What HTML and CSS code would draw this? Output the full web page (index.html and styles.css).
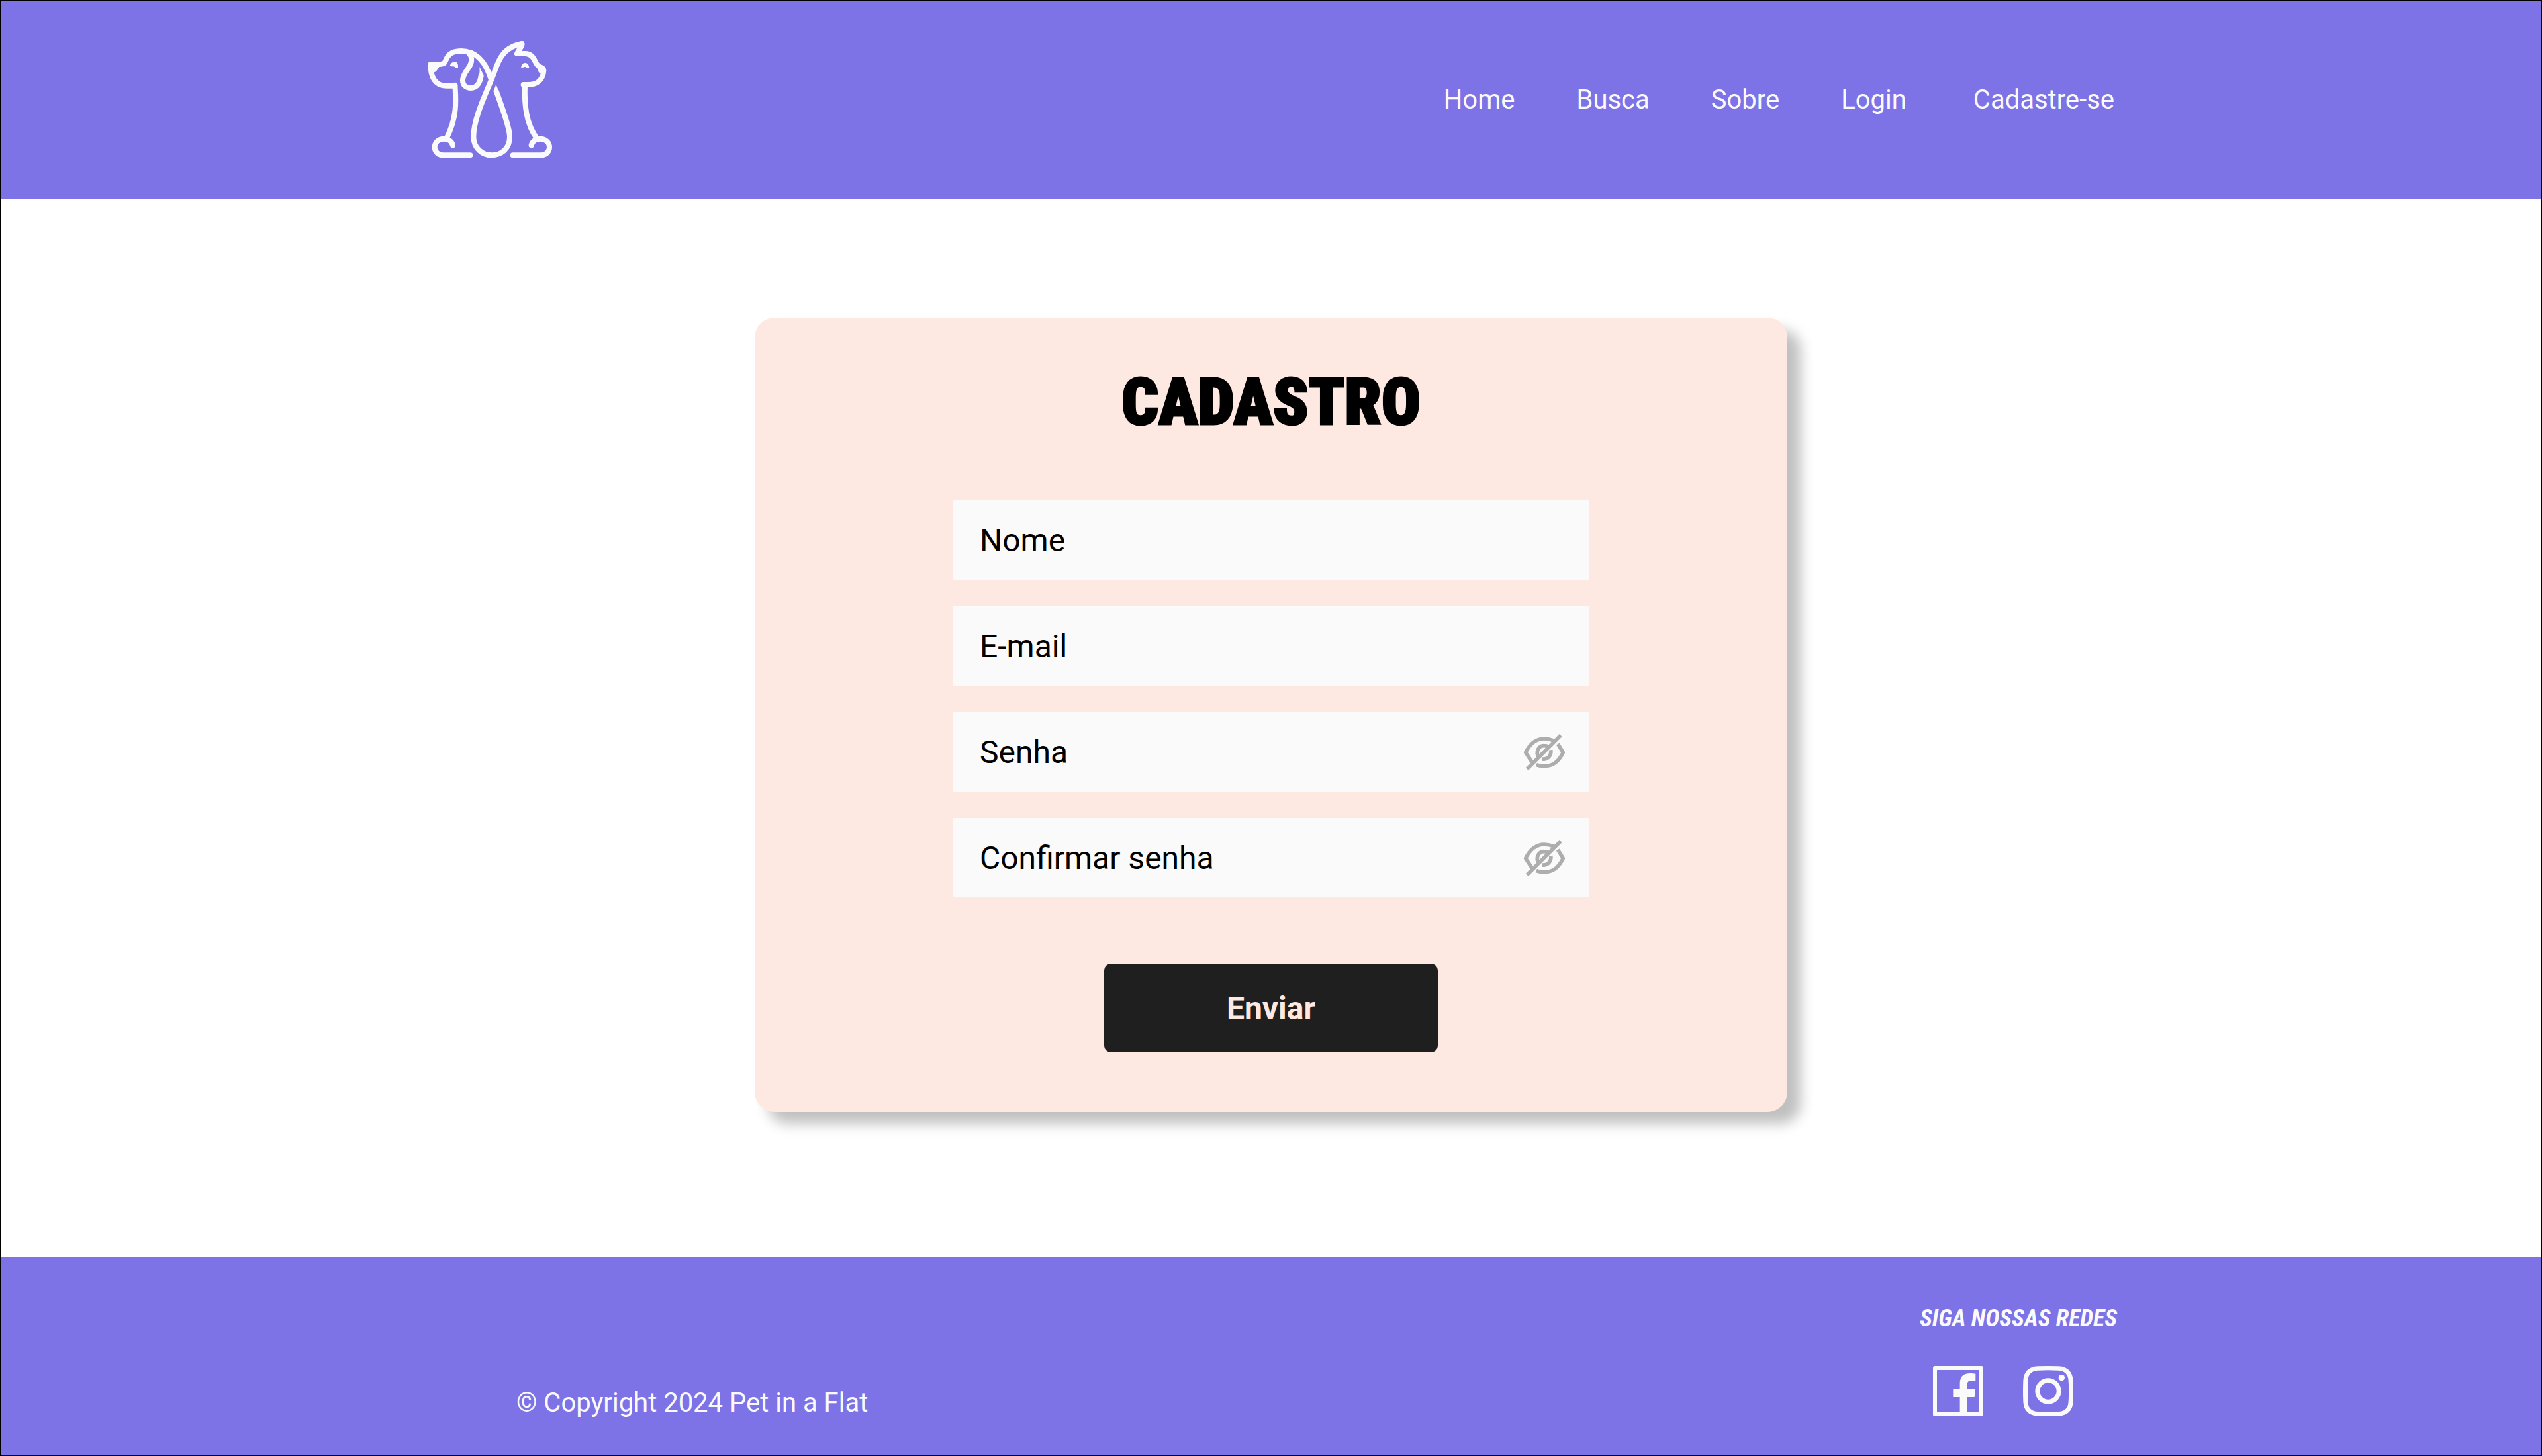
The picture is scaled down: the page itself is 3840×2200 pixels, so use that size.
FILE: index.html
```html
<!DOCTYPE html>
<html lang="pt-BR">
<head>
<meta charset="utf-8">
<meta name="viewport" content="width=device-width, initial-scale=1">
<title>Cadastro - Pet in a Flat</title>
<link rel="stylesheet" href="styles.css">
</head>
<body>
<header class="site-header">
  <a class="logo" href="#" aria-label="Pet in a Flat">
    <svg class="logo-art" viewBox="45 30 570 540" aria-hidden="true">
      <g class="line">
        <path d="M62 142C85 140 105 145 122 137C134 128 130 81 200 81C270 81 310 130 335 208"/>
        <path d="M62 142C60 195 80 239 132 239H172"/>
        <path d="M172 236C176 300 184 380 133 478"/>
        <path d="M162 508C158 490 142 479 122 479C95 479 80 497 80 517C80 538 97 553 118 553H241"/>
        <path d="M232 88C250 105 250 128 239 148C228 168 207 186 207 215C207 238 225 249 244 249C272 249 286 222 290 194"/>
        <path d="M475 48C415 58 385 95 370 128C355 160 348 185 330 228C300 300 256 395 256 470C256 520 295 553 338 553C385 553 420 520 420 470C420 430 385 335 359 264"/>
        <path d="M475 48C478 62 460 75 453 93H490C535 93 532 142 554 152C568 156 574 160 574 171C570 215 540 235 500 234H482"/>
        <path d="M489 236C486 320 492 410 544 479"/>
        <path d="M518 508C522 490 538 479 558 479C585 479 600 497 600 517C600 538 583 553 562 553H434"/>
      </g>
      <g class="solid">
        <path d="M51 135C62 131 104 134 120 142C98 145 98 162 91 167C85 177 76 179 66 178Z"/>
        <path d="M149 148C155 125 186 122 186 148V156C178 162 172 152 165 151C158 150 152 153 149 148Z"/>
        <path d="M472 157V151C478 130 505 128 508 157C500 162 495 153 489 153C482 153 476 160 472 157Z"/>
        <path d="M283 153L301 190L298 206L279 199C285 180 284 170 283 153Z"/>
        <path d="M358 233L372 268L350 272L347 262Z"/>
        <path d="M548 150C542 160 552 164 549 172C553 184 562 184 572 184L580 160Z"/>
      </g>
    </svg>
  </a>
  <nav class="main-nav" aria-label="Principal">
    <a href="#">Home</a>
    <a href="#">Busca</a>
    <a href="#">Sobre</a>
    <a href="#">Login</a>
    <a class="nav-signup" href="#">Cadastre-se</a>
  </nav>
</header>

<main class="content">
  <form class="card">
    <h1 class="card-title">CADASTRO</h1>
    <div class="fields">
      <div class="field"><input type="text" placeholder="Nome" aria-label="Nome"></div>
      <div class="field"><input type="email" placeholder="E-mail" aria-label="E-mail"></div>
      <div class="field">
        <input type="password" placeholder="Senha" aria-label="Senha">
        <button class="toggle" type="button" aria-label="Mostrar senha">
          <svg class="eye" viewBox="60 138 198 174" aria-hidden="true">
            <path class="eye-line" d="M103 272L74 228C95 185 125 165 159 165C176 165 190 169 203 175"/>
            <path class="eye-line" d="M220 189L244 228C222 272 197 290 159 290C145 290 133 288 122 284"/>
            <path class="eye-line" d="M133 250C119 228 130 196 159 197C166 197 173 200 178 203"/>
            <path class="eye-line" d="M188 217C192 238 178 261 148 258"/>
            <path class="eye-line" d="M80 303L233 150"/>
          </svg>
        </button>
      </div>
      <div class="field">
        <input type="password" placeholder="Confirmar senha" aria-label="Confirmar senha">
        <button class="toggle" type="button" aria-label="Mostrar senha">
          <svg class="eye" viewBox="60 138 198 174" aria-hidden="true">
            <path class="eye-line" d="M103 272L74 228C95 185 125 165 159 165C176 165 190 169 203 175"/>
            <path class="eye-line" d="M220 189L244 228C222 272 197 290 159 290C145 290 133 288 122 284"/>
            <path class="eye-line" d="M133 250C119 228 130 196 159 197C166 197 173 200 178 203"/>
            <path class="eye-line" d="M188 217C192 238 178 261 148 258"/>
            <path class="eye-line" d="M80 303L233 150"/>
          </svg>
        </button>
      </div>
    </div>
    <button class="submit" type="submit">Enviar</button>
  </form>
</main>

<footer class="site-footer">
  <p class="copyright">© Copyright 2024 Pet in a Flat</p>
  <section class="social">
    <h2 class="social-title">SIGA NOSSAS REDES</h2>
    <div class="social-links">
      <a href="#" aria-label="Facebook">
        <svg class="social-icon" viewBox="0 0 228 228" aria-hidden="true">
          <path fill-rule="evenodd" d="M8 0H220Q228 0 228 8V220Q228 228 220 228H8Q0 228 0 220V8Q0 0 8 0ZM18 18V210H122V141H91V105H122V78C122 48 138 33 168 33C178 33 186 34 193 35V66H174C160 66 156 72 156 82V105H192L188 141H156V210H210V18Z"/>
        </svg>
      </a>
      <a href="#" aria-label="Instagram">
        <svg class="social-icon" viewBox="0 0 228 228" aria-hidden="true">
          <path fill-rule="evenodd" d="M66 1Q114 -1 162 1C202 3 225 26 227 66Q229 114 227 162C225 202 202 225 162 227Q114 229 66 227C26 225 3 202 1 162Q-1 114 1 66C3 26 26 3 66 1ZM67 20C38 22 23 38 22 67Q20 114 22 161C23 190 38 205 67 207Q114 209 161 207C190 205 205 190 206 161Q209 114 206 67C205 38 190 22 161 20Q114 18 67 20ZM114 55A59 59 0 1 1 114 173A59 59 0 1 1 114 55ZM114 76A38 38 0 1 0 114 152A38 38 0 1 0 114 76Z"/>
          <circle cx="175" cy="53" r="14"/>
        </svg>
      </a>
    </div>
  </section>
</footer>
</body>
</html>
```

FILE: styles.css
```css
* {
  box-sizing: border-box;
}

body {
  margin: 0;
  min-height: 100vh;
  display: flex;
  flex-direction: column;
  border: 2px solid #000;
  background: #fff;
  color: #000;
  font-family: Roboto, "Liberation Sans", sans-serif;
}

h1, h2, p {
  margin: 0;
}

a {
  color: inherit;
  text-decoration: none;
}

/* Header */
.site-header {
  display: flex;
  justify-content: space-between;
  align-items: center;
  padding: 58px calc(50% - 1274px) 60px calc(50% - 1275px);
  background: #7d73e6;
  color: #fafafa;
}

.logo-art {
  display: block;
  width: 190px;
  height: 180px;
}

.line {
  fill: none;
  stroke: #fafafa;
  stroke-width: 24;
  stroke-linecap: round;
  stroke-linejoin: round;
}

.solid {
  fill: #fafafa;
}

.main-nav {
  display: flex;
  gap: 93px;
  padding-top: 2px;
  font-size: 40px;
  line-height: 48px;
}

.nav-signup {
  padding-left: 8px;
}

/* Sign-up card */
.content {
  flex: 1;
  display: flex;
  justify-content: center;
  align-items: flex-start;
  padding: 180px 40px;
}

.card {
  width: 1560px;
  max-width: 100%;
  display: flex;
  flex-direction: column;
  align-items: center;
  padding: 70px 40px 90px;
  border-radius: 30px;
  background: #fee9e2;
  box-shadow: 20px 18px 20px rgba(0, 0, 0, 0.25);
}

.card-title {
  font-family: "Roboto Condensed", Lato, sans-serif;
  font-size: 98px;
  font-weight: 900;
  line-height: 116px;
  -webkit-text-stroke: 3px #000;
}

.fields {
  width: 960px;
  max-width: 100%;
  display: grid;
  gap: 40px;
  margin-top: 90px;
}

.field {
  display: flex;
  align-items: center;
  height: 120px;
  background: #fafafa;
}

.field input {
  flex: 1;
  min-width: 0;
  height: 100%;
  padding: 0 40px;
  border: 0;
  background: transparent;
  color: #000;
  font: inherit;
  font-size: 48px;
}

.field input::placeholder {
  color: #000;
  opacity: 1;
}

.toggle {
  padding: 0;
  margin-right: 34px;
  border: 0;
  background: transparent;
  cursor: pointer;
}

.eye {
  display: block;
  width: 66px;
  height: 58px;
}

.eye-line {
  fill: none;
  stroke: #adadad;
  stroke-width: 17;
  stroke-linejoin: round;
}

.submit {
  width: 504px;
  height: 134px;
  margin-top: 100px;
  border: 0;
  border-radius: 10px;
  background: #1f1f1f;
  color: #fee9e2;
  font: inherit;
  font-size: 48px;
  font-weight: 700;
  cursor: pointer;
}

/* Footer */
.site-footer {
  display: flex;
  justify-content: space-between;
  align-items: flex-end;
  padding: 70px calc(50% - 1278px) 58px calc(50% - 1140px);
  background: #7d73e6;
  color: #fafafa;
}

.copyright {
  font-size: 40px;
  line-height: 40px;
}

.social-title {
  font-family: "Roboto Condensed", "Liberation Sans Narrow", Roboto, sans-serif;
  font-size: 36px;
  font-style: italic;
  font-weight: 700;
  line-height: 44px;
}

.social-links {
  display: flex;
  gap: 60px;
  margin-top: 50px;
  padding-left: 20px;
}

.social-icon {
  display: block;
  width: 76px;
  height: 76px;
  fill: #fafafa;
}
```
